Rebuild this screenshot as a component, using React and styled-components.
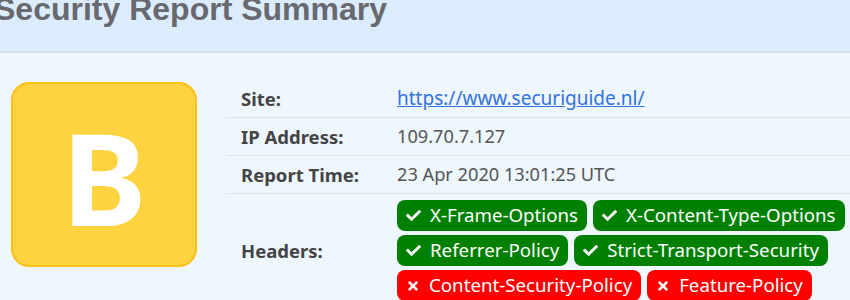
import { createGlobalStyle, styled } from 'styled-components'
import { FaCheck, FaTimes } from 'react-icons/fa'

const report = {
  grade: 'B',
  site: 'https://www.securiguide.nl/',
  ip: '109.70.7.127',
  time: '23 Apr 2020 13:01:25 UTC',
  headers: [
    { name: 'X-Frame-Options', ok: true },
    { name: 'X-Content-Type-Options', ok: true },
    { name: 'Referrer-Policy', ok: true },
    { name: 'Strict-Transport-Security', ok: true },
    { name: 'Content-Security-Policy', ok: false },
    { name: 'Feature-Policy', ok: false }
  ]
}

export default function App () {
  return (
    <>
      <GlobalStyle />
      <Header>
        <Title>Security Report Summary</Title>
      </Header>
      <Main>
        <GradeBox>{report.grade}</GradeBox>
        <InfoTable>
          <tbody>
            <Row>
              <Label>Site:</Label>
              <Value><SiteLink href={report.site}>{report.site}</SiteLink></Value>
            </Row>
            <Row>
              <Label>IP Address:</Label>
              <Value>{report.ip}</Value>
            </Row>
            <Row>
              <Label>Report Time:</Label>
              <Value>{report.time}</Value>
            </Row>
            <Row>
              <Label>Headers:</Label>
              <Value $list>
                <BadgeList>
                  {report.headers.map((h) => (
                    <Badge key={h.name} $ok={h.ok}>
                      {h.ok ? <FaCheck size={15} /> : <FaTimes size={14} />}
                      {h.name}
                    </Badge>
                  ))}
                </BadgeList>
              </Value>
            </Row>
          </tbody>
        </InfoTable>
      </Main>
    </>
  )
}

const GlobalStyle = createGlobalStyle`
  body {
    margin: 0;
    background: #eef6fe;
    font-family: "Noto Sans", "Open Sans", sans-serif;
    overflow: hidden;
  }
`

const Header = styled.header`
  height: 51px;
  overflow: hidden;
  background: #dbecfd;
  border-bottom: 2px solid #d3e1ee;
`

const Title = styled.h1`
  margin: -9px 0 0 -6px;
  font-family: "Liberation Sans", Arial, sans-serif;
  font-size: 32px;
  font-weight: 700;
  line-height: 1.15;
  color: #68696f;
  white-space: nowrap;
`

const Main = styled.main`
  display: flex;
  align-items: flex-start;
  gap: 29px;
  padding: 27px 0 0 11px;
`

const GradeBox = styled.div`
  flex: none;
  box-sizing: content-box;
  width: 182px;
  height: 177px;
  padding-top: 4px;
  margin-top: 2px;
  display: flex;
  align-items: center;
  justify-content: center;
  background: #ffd23f;
  border: 2px solid #fcc21b;
  border-radius: 18px;
  color: #fff;
  font-size: 128px;
  font-weight: 700;
  line-height: 1;
`

const InfoTable = styled.table`
  flex: 1 0 auto;
  border-collapse: collapse;
`

const Row = styled.tr`
  border-bottom: 1px solid #dde4eb;
`

const Label = styled.th`
  width: 156px;
  padding: 5px 0 5px 15px;
  text-align: left;
  vertical-align: middle;
  font-size: 18.5px;
  font-weight: 700;
  line-height: 27px;
  color: #444;
`

const Value = styled.td`
  padding: ${(p) => (p.$list ? '6px 0' : '5px 0')};
  font-size: 18.2px;
  line-height: 27px;
  color: #555;
`

const SiteLink = styled.a`
  color: #3273dc;
  font-size: 19px;
  text-decoration: underline;
`

const BadgeList = styled.div`
  display: flex;
  flex-wrap: wrap;
  gap: 4px 6px;
  width: 480px;
`

const Badge = styled.span`
  display: inline-flex;
  align-items: center;
  gap: 9px;
  height: 31px;
  padding: 0 9px;
  border-radius: 8px;
  background: ${(p) => (p.$ok ? '#008000' : '#ff0000')};
  color: #fff;
  font-size: 18.7px;
  line-height: 1;
`
